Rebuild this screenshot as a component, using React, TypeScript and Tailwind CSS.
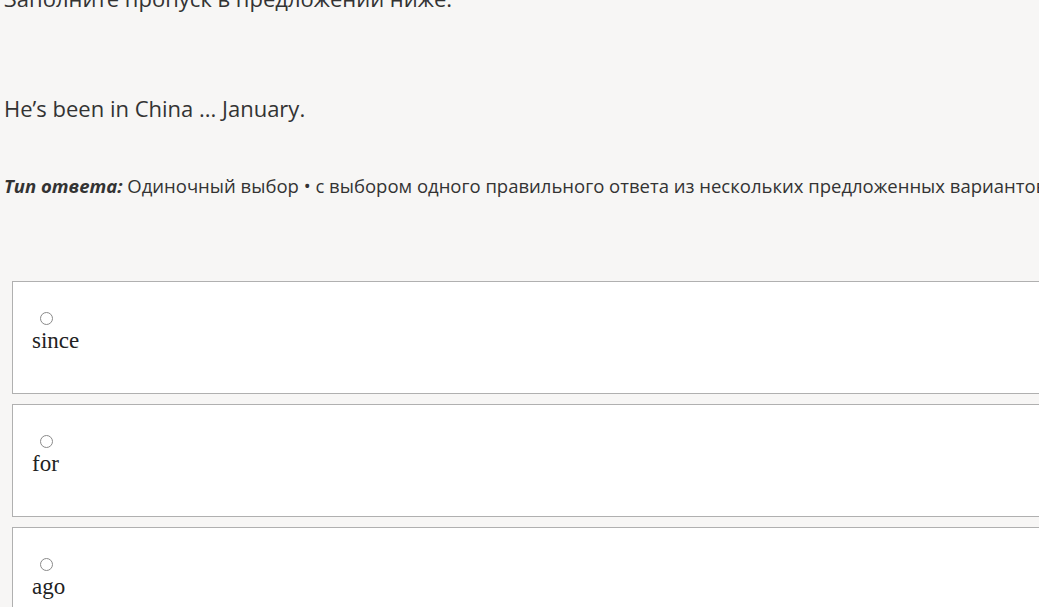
export default function App() {
  const options = ["since", "for", "ago"];
  return (
    <div className="h-[607px] w-[1039px] overflow-hidden bg-[#f7f6f5] text-[#333333]" style={{ fontFamily: '"Open Sans", "Noto Sans", sans-serif' }}>
      <div className="-mt-[17px] w-[1200px] pl-[4px]">
        <p className="text-[22px] leading-[30px]">Заполните пропуск в предложении ниже.</p>
        <p className="mt-[80px] text-[22px] leading-[30px]">He’s been in China ... January.</p>
        <p className="mt-[50px] whitespace-nowrap text-[18.5px] leading-[26px]">
          <span className="font-bold italic">Тип ответа:</span> Одиночный выбор • с выбором одного правильного ответа из нескольких предложенных вариантов
        </p>
      </div>
      <div className="mt-[82px] ml-[12px] flex w-[1100px] flex-col gap-[10px]">
        {options.map((o) => (
          <label key={o} className="flex h-[113px] flex-col border border-[#b0b0b0] bg-white pl-[19px] pt-[30px] text-[#222]" style={{ fontFamily: '"Liberation Serif", serif' }}>
            <span className="ml-[8px] block h-[13px] w-[13px] rounded-full border border-[#8a8a8a] bg-white" />
            <span className="mt-[3px] text-[23px] leading-[26px]">{o}</span>
          </label>
        ))}
      </div>
    </div>
  );
}
